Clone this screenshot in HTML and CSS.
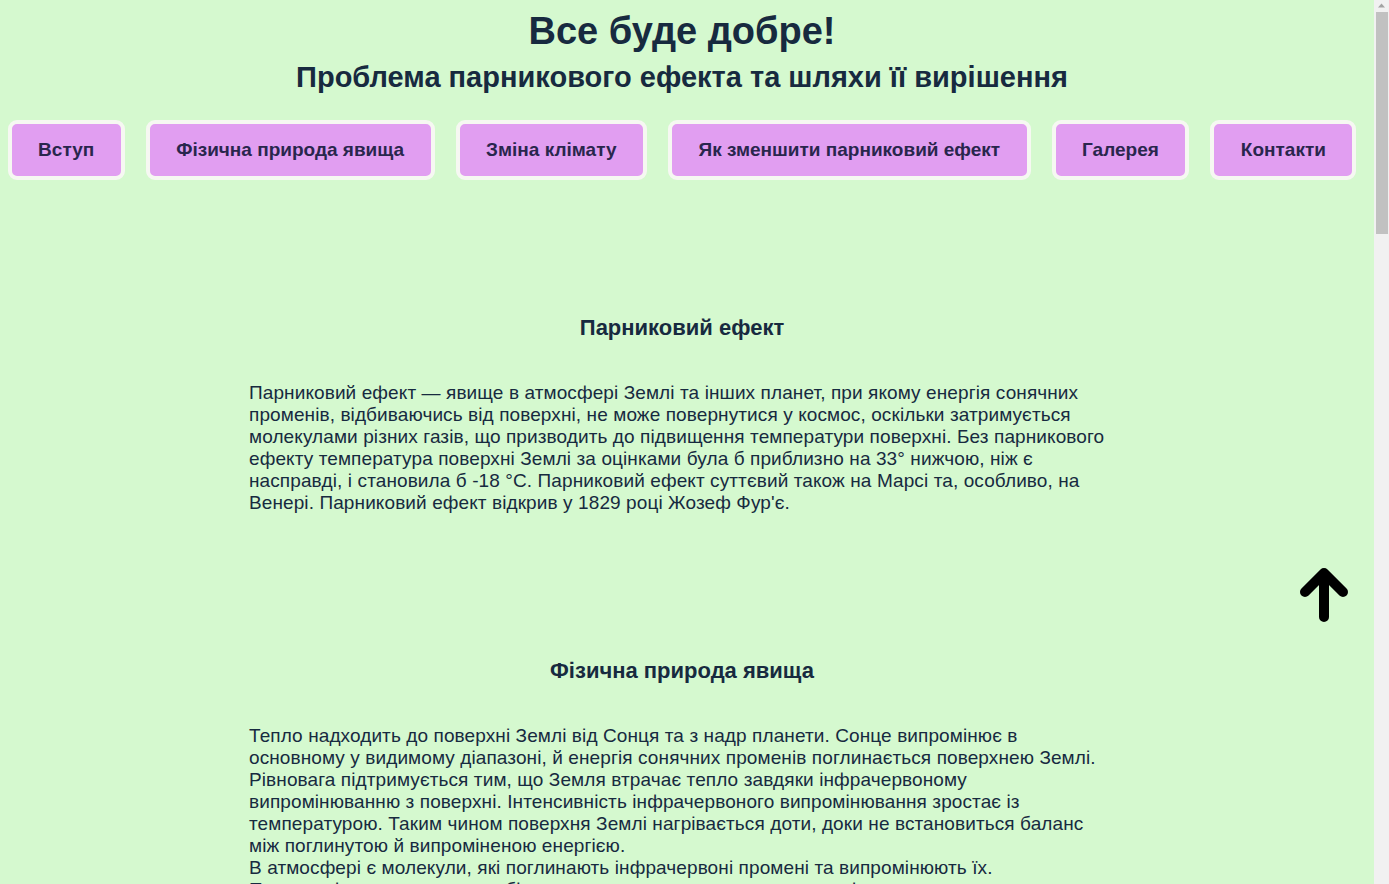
FILE: index.html
```html
<!DOCTYPE html>
<html lang="uk">
<head>
<meta charset="utf-8">
<title>Все буде добре!</title>
<link rel="stylesheet" href="styles.css">
</head>
<body>
<header class="header">
  <h1 class="title">Все буде добре!</h1>
  <h2 class="subtitle">Проблема парникового ефекта та шляхи її вирішення</h2>
  <nav class="nav">
    <a class="nav-btn" href="#intro">Вступ</a>
    <a class="nav-btn" href="#physics">Фізична природа явища</a>
    <a class="nav-btn" href="#climate">Зміна клімату</a>
    <a class="nav-btn" href="#reduce">Як зменшити парниковий ефект</a>
    <a class="nav-btn" href="#gallery">Галерея</a>
    <a class="nav-btn" href="#contacts">Контакти</a>
  </nav>
</header>
<main class="main">
  <section class="section" id="intro">
    <h3 class="section-title">Парниковий ефект</h3>
    <p class="section-text">Парниковий ефект — явище в атмосфері Землі та інших планет, при якому енергія сонячних променів, відбиваючись від поверхні, не може повернутися у космос, оскільки затримується молекулами різних газів, що призводить до підвищення температури поверхні. Без парникового ефекту температура поверхні Землі за оцінками була б приблизно на 33° нижчою, ніж є насправді, і становила б -18 °C. Парниковий ефект суттєвий також на Марсі та, особливо, на Венері. Парниковий ефект відкрив у 1829 році Жозеф Фур'є.</p>
  </section>
  <section class="section" id="physics">
    <h3 class="section-title">Фізична природа явища</h3>
    <p class="section-text">Тепло надходить до поверхні Землі від Сонця та з надр планети. Сонце випромінює в основному у видимому діапазоні, й енергія сонячних променів поглинається поверхнею Землі. Рівновага підтримується тим, що Земля втрачає тепло завдяки інфрачервоному випромінюванню з поверхні. Інтенсивність інфрачервоного випромінювання зростає із температурою. Таким чином поверхня Землі нагрівається доти, доки не встановиться баланс між поглинутою й випроміненою енергією.<br>В атмосфері є молекули, які поглинають інфрачервоні промені та випромінюють їх.<br>Парникові гази пропускають більшу частину видимого сонячного світла, але поглинають інфрачервоне випромінювання. Тобто частина тепла повертається до поверхні Землі.</p>
  </section>
  <section class="section" id="climate">
    <h3 class="section-title">Зміна клімату</h3>
    <p class="section-text">Посилення парникового ефекту внаслідок діяльності людини призводить до глобального потепління та зміни клімату на планеті.</p>
  </section>
</main>
<a class="to-top" href="#" aria-label="Вгору">
  <svg class="to-top-icon" viewBox="0 0 52 58" width="52" height="58">
    <path d="M7 27 L26 8 L45 27 M26 10 L26 52" fill="none" stroke="#000" stroke-width="10" stroke-linecap="round" stroke-linejoin="round"/>
  </svg>
</a>
<div class="scrollbar" aria-hidden="true">
  <svg class="scrollbar-arrow" viewBox="0 0 15 11" width="15" height="11">
    <path d="M4 7.5 L7.5 3.5 L11 7.5 Z" fill="#a3a3a3"/>
  </svg>
  <div class="scrollbar-thumb"></div>
</div>
</body>
</html>
```

FILE: styles.css
```css
html, body {
  margin: 0;
  padding: 0;
}
body {
  background: #d5f9cf;
  color: #172a3f;
  font-family: "Liberation Sans", Arial, sans-serif;
  padding-right: 25px;
}
.header {
  padding-top: 10px;
  text-align: center;
}
.title {
  margin: 0;
  font-size: 38px;
  font-weight: bold;
  line-height: 42px;
}
.subtitle {
  margin: 9px 0 0;
  font-size: 29px;
  font-weight: bold;
  line-height: 32px;
}
.nav {
  display: flex;
  justify-content: center;
  gap: 21px;
  margin-top: 27px;
}
.nav-btn {
  display: block;
  background: #e19ef1;
  border: 4px solid #f6f8f2;
  border-radius: 9px;
  padding: 15px 26.5px;
  font-size: 19px;
  line-height: 22px;
  font-weight: bold;
  color: #29264d;
  text-decoration: none;
  white-space: nowrap;
}
.main {
  padding-bottom: 200px;
}
.section {
  width: 866px;
  margin: 0 auto;
  padding: 135px 0 9px;
}
.section-title {
  margin: 0;
  text-align: center;
  font-size: 22px;
  line-height: 25px;
  font-weight: bold;
}
.section-text {
  margin: 42px 0 0;
  font-size: 19px;
  letter-spacing: 0.1px;
  line-height: 22px;
}
.to-top {
  position: fixed;
  left: 1298px;
  top: 565px;
  display: block;
  width: 52px;
  height: 58px;
}
.to-top-icon {
  display: block;
}
.scrollbar {
  position: fixed;
  top: 0;
  right: 0;
  width: 15px;
  height: 100%;
  background: #f1f1f1;
}
.scrollbar-arrow {
  display: block;
}
.scrollbar-thumb {
  margin: 1px 1px 0 2px;
  height: 222px;
  background: #c1c1c1;
}
```
